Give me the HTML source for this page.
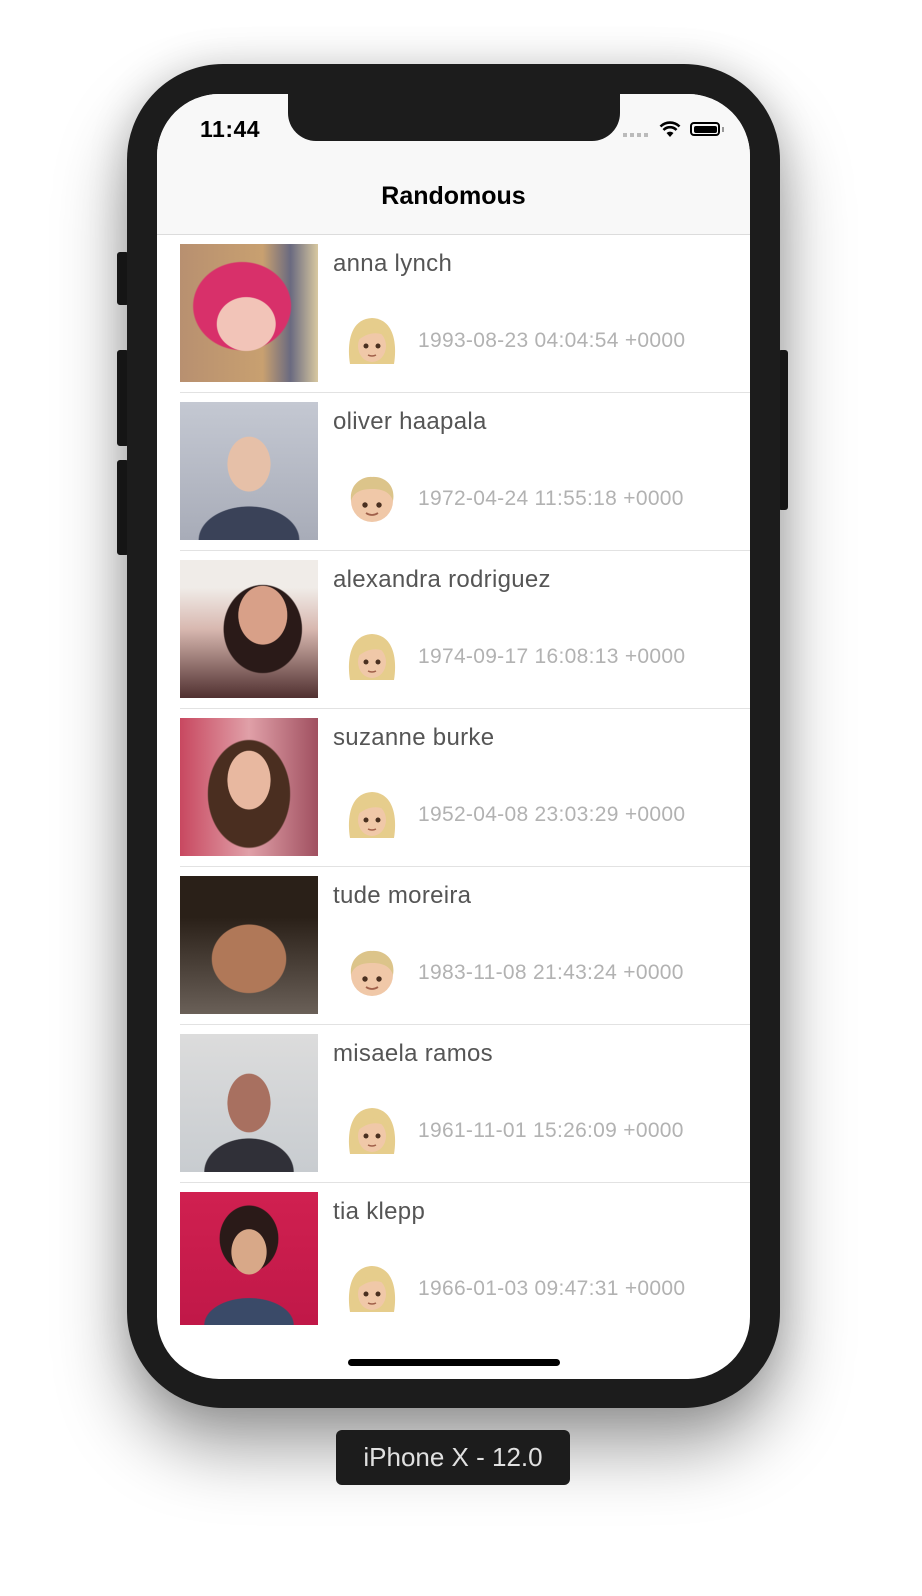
<!DOCTYPE html>
<html><head><meta charset="utf-8"><style>
body{margin:0;width:922px;height:1596px;background:#fff;position:relative;overflow:hidden;font-family:"Liberation Sans",sans-serif}
.abs{position:absolute}
.phone{left:127px;top:64px;width:653px;height:1344px;background:#1c1c1c;border-radius:96px;box-shadow:0 40px 70px rgba(0,0,0,.38),0 0 40px rgba(0,0,0,.15)}
.btn{background:#1c1c1c;border-radius:3px}
.screen{left:157px;top:94px;width:593px;height:1285px;background:#fff;border-radius:62px;overflow:hidden}
.nav{left:0;top:0;width:593px;height:140px;background:#f8f8f8;border-bottom:1px solid #dcdcdc}
.notch{left:131px;top:-2px;width:332px;height:49px;background:#1c1c1c;border-radius:0 0 28px 28px}
.time{left:43px;top:22px;font-size:23px;font-weight:bold;color:#000;letter-spacing:.5px}
.title{left:0;width:593px;top:88px;text-align:center;font-size:25px;font-weight:bold;color:#000}
.row{left:0;width:593px;height:158px}
.pic{left:23px;top:9px;width:138px;height:138px}
.name{left:176px;top:15px;font-size:24px;color:#555;letter-spacing:.3px}
.date{left:261px;top:94px;font-size:21px;color:#b2b2b2;letter-spacing:.3px}
.emo{left:190px;top:81px;width:50px;height:50px}
.sep{left:23px;top:157px;width:570px;height:1px;background:#e2e2e2}
.home{left:191px;top:1265px;width:212px;height:7px;background:#000;border-radius:4px}
.label{left:336px;top:1430px;width:234px;height:55px;background:#1c1c1c;border-radius:6px;color:#e0e0e0;font-size:26px;text-align:center;line-height:55px}
</style></head><body>
<svg width="0" height="0" style="position:absolute">
<defs>
<g id="woman">
<path d="M3 48 C0 30 2 3 25 2 C48 3 50 30 47 48 Z" fill="#e6cd8c"/>
<ellipse cx="25" cy="30" rx="14" ry="16" fill="#f0c8a8"/>
<path d="M9 26 C12 10 30 6 42 22 C34 16 22 14 9 26Z" fill="#e6cd8c"/>
<circle cx="19" cy="30" r="2.5" fill="#4a3020"/><circle cx="31" cy="30" r="2.5" fill="#4a3020"/>
<path d="M21 39 Q25 41 29 39" stroke="#a0604a" stroke-width="1.5" fill="none"/>
</g>
<g id="boy">
<ellipse cx="25" cy="27" rx="21" ry="21" fill="#f0c8a8"/>
<path d="M4 27 C2 8 18 2 25 3 C36 2 49 10 46 27 C43 17 34 15 25 15 C16 15 7 17 4 27Z" fill="#dcc48a"/>
<circle cx="18" cy="31" r="2.7" fill="#4a3020"/><circle cx="32" cy="31" r="2.7" fill="#4a3020"/>
<path d="M19 39 Q25 43 31 39" stroke="#a0604a" stroke-width="1.8" fill="none"/>
</g>
</defs></svg>
<div class="abs btn" style="left:117px;top:252px;width:12px;height:53px"></div>
<div class="abs btn" style="left:117px;top:350px;width:12px;height:96px"></div>
<div class="abs btn" style="left:117px;top:460px;width:12px;height:95px"></div>
<div class="abs btn" style="left:778px;top:350px;width:10px;height:160px"></div>
<div class="abs phone"></div>
<div class="abs screen">
 <div class="abs nav"></div>
 <div class="abs notch"></div>
 <div class="abs time">11:44</div>
 <div class="abs" style="left:466px;top:39px;width:28px;height:4px;background:repeating-linear-gradient(90deg,#bbb 0 4px,transparent 4px 7px)"></div>
 <svg class="abs" style="left:502px;top:26px" width="22" height="18" viewBox="0 0 22 18"><path d="M11 17 L7.5 13 A5 5 0 0 1 14.5 13Z" fill="#000"/><path d="M4.5 10 A9 9 0 0 1 17.5 10" stroke="#000" stroke-width="2.6" fill="none"/><path d="M1.5 6.5 A13.5 13.5 0 0 1 20.5 6.5" stroke="#000" stroke-width="2.6" fill="none"/></svg>
 <div class="abs" style="left:533px;top:28px;width:30px;height:14px;border:2px solid #000;border-radius:4px;box-sizing:border-box;padding:1.5px"><div style="background:#000;width:100%;height:100%;border-radius:2px"></div></div>
 <div class="abs" style="left:565px;top:33px;width:2px;height:5px;background:#999"></div>
 <div class="abs title">Randomous</div>

 <div class="abs row" style="top:141px">
  <div class="abs pic" style="background:radial-gradient(ellipse 35% 32% at 48% 58%,#f2c4b8 60%,transparent 62%),radial-gradient(ellipse 50% 45% at 45% 45%,#d8306a 70%,transparent 72%),linear-gradient(90deg,#b89070,#c8a070 60%,#6a6a80 80%,#d8c8a0)"></div>
  <div class="abs name">anna lynch</div>
  <svg class="abs emo" viewBox="0 0 50 50"><use href="#woman"/></svg>
  <div class="abs date">1993-08-23 04:04:54 +0000</div>
  <div class="abs sep"></div>
 </div>
 <div class="abs row" style="top:299px">
  <div class="abs pic" style="background:radial-gradient(ellipse 22% 28% at 50% 45%,#e6c0a8 70%,transparent 72%),radial-gradient(ellipse 45% 30% at 50% 100%,#3a4258 80%,transparent 82%),linear-gradient(#c4c8d2,#a8acb8)"></div>
  <div class="abs name">oliver haapala</div>
  <svg class="abs emo" viewBox="0 0 50 50"><use href="#boy"/></svg>
  <div class="abs date">1972-04-24 11:55:18 +0000</div>
  <div class="abs sep"></div>
 </div>
 <div class="abs row" style="top:457px">
  <div class="abs pic" style="background:radial-gradient(ellipse 25% 30% at 60% 40%,#d8a088 70%,transparent 72%),radial-gradient(ellipse 40% 45% at 60% 50%,#2a1a18 70%,transparent 72%),linear-gradient(#f0ece8 20%,#d8b8b0 50%,#503030)"></div>
  <div class="abs name">alexandra rodriguez</div>
  <svg class="abs emo" viewBox="0 0 50 50"><use href="#woman"/></svg>
  <div class="abs date">1974-09-17 16:08:13 +0000</div>
  <div class="abs sep"></div>
 </div>
 <div class="abs row" style="top:615px">
  <div class="abs pic" style="background:radial-gradient(ellipse 22% 30% at 50% 45%,#e8b8a0 70%,transparent 72%),radial-gradient(ellipse 42% 55% at 50% 55%,#4a2e20 70%,transparent 72%),linear-gradient(90deg,#c84860,#e0a0a8 50%,#a05060)"></div>
  <div class="abs name">suzanne burke</div>
  <svg class="abs emo" viewBox="0 0 50 50"><use href="#woman"/></svg>
  <div class="abs date">1952-04-08 23:03:29 +0000</div>
  <div class="abs sep"></div>
 </div>
 <div class="abs row" style="top:773px">
  <div class="abs pic" style="background:radial-gradient(ellipse 38% 35% at 50% 60%,#b07858 70%,transparent 72%),linear-gradient(#2a2018 30%,#6a6058)"></div>
  <div class="abs name">tude moreira</div>
  <svg class="abs emo" viewBox="0 0 50 50"><use href="#boy"/></svg>
  <div class="abs date">1983-11-08 21:43:24 +0000</div>
  <div class="abs sep"></div>
 </div>
 <div class="abs row" style="top:931px">
  <div class="abs pic" style="background:radial-gradient(ellipse 22% 30% at 50% 50%,#a87060 70%,transparent 72%),radial-gradient(ellipse 40% 30% at 50% 100%,#303038 80%,transparent 82%),linear-gradient(#dcdcdc,#c8ccd0)"></div>
  <div class="abs name">misaela ramos</div>
  <svg class="abs emo" viewBox="0 0 50 50"><use href="#woman"/></svg>
  <div class="abs date">1961-11-01 15:26:09 +0000</div>
  <div class="abs sep"></div>
 </div>
 <div class="abs row" style="top:1089px">
  <div class="abs pic" style="height:133px;background:radial-gradient(ellipse 18% 24% at 50% 45%,#d8a888 70%,transparent 72%),radial-gradient(ellipse 30% 35% at 50% 35%,#2a1a18 70%,transparent 72%),radial-gradient(ellipse 40% 25% at 50% 100%,#3a4a68 80%,transparent 82%),linear-gradient(#d02050,#c01848)"></div>
  <div class="abs name">tia klepp</div>
  <svg class="abs emo" viewBox="0 0 50 50"><use href="#woman"/></svg>
  <div class="abs date">1966-01-03 09:47:31 +0000</div>
 </div>
 <div class="abs home"></div>
</div>
<div class="abs label">iPhone X - 12.0</div>
</body></html>
